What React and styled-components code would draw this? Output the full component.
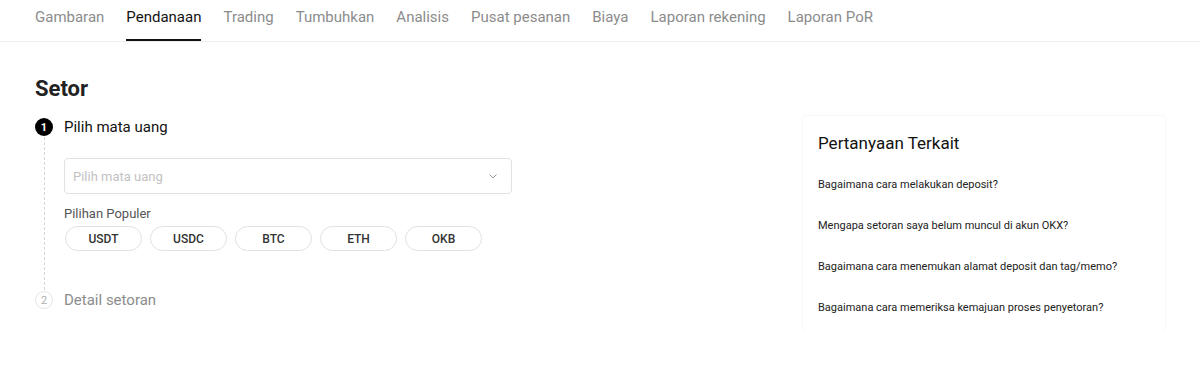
import styled, { createGlobalStyle } from 'styled-components';

const GlobalStyle = createGlobalStyle`
  body {
    margin: 0;
    background: #fff;
    font-family: Roboto, "Noto Sans", sans-serif;
    color: #121212;
  }
`;

const tabs = ['Gambaran', 'Pendanaan', 'Trading', 'Tumbuhkan', 'Analisis', 'Pusat pesanan', 'Biaya', 'Laporan rekening', 'Laporan PoR'];
const coins = ['USDT', 'USDC', 'BTC', 'ETH', 'OKB'];
const questions = [
  'Bagaimana cara melakukan deposit?',
  'Mengapa setoran saya belum muncul di akun OKX?',
  'Bagaimana cara menemukan alamat deposit dan tag/memo?',
  'Bagaimana cara memeriksa kemajuan proses penyetoran?',
];

const App = () => {
  return (
    <>
      <GlobalStyle />
      <NavBar>
        {tabs.map((t) => (
          <Tab key={t} $active={t === 'Pendanaan'}>{t}</Tab>
        ))}
      </NavBar>
      <Main>
        <LeftCol>
          <Title>Setor</Title>
          <Step>
            <StepHead>
              <StepNum $active>1</StepNum>
              <StepLabel $active>Pilih mata uang</StepLabel>
            </StepHead>
            <StepBody>
              <Select>
                <Placeholder>Pilih mata uang</Placeholder>
                <svg width="12" height="12" viewBox="0 0 12 12" fill="none">
                  <path d="M2.5 4.5L6 8l3.5-3.5" stroke="#9a9a9a" strokeWidth="1" />
                </svg>
              </Select>
              <PopularLabel>Pilihan Populer</PopularLabel>
              <Chips>
                {coins.map((c) => (
                  <Chip key={c}>{c}</Chip>
                ))}
              </Chips>
            </StepBody>
          </Step>
          <StepHead>
            <StepNum>2</StepNum>
            <StepLabel>Detail setoran</StepLabel>
          </StepHead>
        </LeftCol>
        <Card>
          <CardTitle>Pertanyaan Terkait</CardTitle>
          {questions.map((q) => (
            <Question key={q}>{q}</Question>
          ))}
        </Card>
      </Main>
    </>
  );
};

const NavBar = styled.nav`
  display: flex;
  gap: 22px;
  padding: 0 35px;
  height: 41px;
  border-bottom: 1px solid #eeeeee;
`;

const Tab = styled.div`
  display: flex;
  align-items: center;
  height: 100%;
  box-sizing: border-box;
  padding-bottom: 5px;
  font-size: 15px;
  color: ${(p) => (p.$active ? '#121212' : '#8c8c8c')};
  border-bottom: 2px solid ${(p) => (p.$active ? '#121212' : 'transparent')};
  margin-bottom: -1px;
`;

const Main = styled.div`
  display: flex;
  justify-content: space-between;
  padding: 32px 35px 0 35px;
`;

const LeftCol = styled.div`
  width: 477px;
  display: flex;
  flex-direction: column;
`;

const Title = styled.h1`
  margin: 0;
  font-size: 22px;
  font-weight: 700;
  line-height: 30px;
  color: #222;
`;

const Step = styled.div`
  display: flex;
  flex-direction: column;
  margin-top: 14px;
`;

const StepHead = styled.div`
  display: flex;
  align-items: center;
  gap: 11px;
  height: 18px;
`;

const StepNum = styled.div`
  width: 18px;
  height: 18px;
  border-radius: 50%;
  box-sizing: border-box;
  display: flex;
  align-items: center;
  justify-content: center;
  font-size: 11px;
  background: ${(p) => (p.$active ? '#000' : '#fff')};
  color: ${(p) => (p.$active ? '#fff' : '#b0b0b0')};
  border: ${(p) => (p.$active ? 'none' : '1px solid #e6e6e6')};
  font-weight: ${(p) => (p.$active ? 700 : 400)};
`;

const StepLabel = styled.div`
  font-size: 15px;
  color: ${(p) => (p.$active ? '#121212' : '#8c8c8c')};
`;

const StepBody = styled.div`
  margin-left: 9px;
  border-left: 1px dashed #d6d6d6;
  padding: 21px 0 39px 19px;
  margin-top: 1px;
  margin-bottom: 1px;
`;

const Select = styled.div`
  height: 36px;
  box-sizing: border-box;
  border: 1px solid #e2e2e2;
  border-radius: 4px;
  display: flex;
  align-items: center;
  justify-content: space-between;
  padding: 0 12px 0 8px;
`;

const Placeholder = styled.span`
  font-size: 13px;
  color: #c2c2c2;
`;

const PopularLabel = styled.div`
  margin-top: 12px;
  font-size: 13px;
  color: #555;
  line-height: 16px;
`;

const Chips = styled.div`
  display: flex;
  gap: 8px;
  margin-top: 4px;
  padding-left: 1px;
`;

const Chip = styled.div`
  width: 77px;
  height: 25px;
  box-sizing: border-box;
  border: 1px solid #e2e2e2;
  border-radius: 13px;
  display: flex;
  align-items: center;
  justify-content: center;
  font-size: 12px;
  font-weight: 500;
  color: #333;
`;

const Card = styled.div`
  width: 362px;
  height: 215px;
  margin-top: 42px;
  box-sizing: border-box;
  padding: 16px 15px;
  border-radius: 4px;
  box-shadow: 0 0 3px rgba(0, 0, 0, 0.08);
  display: flex;
  flex-direction: column;
`;

const CardTitle = styled.div`
  font-size: 17px;
  color: #121212;
  line-height: 22px;
  margin-bottom: 12px;
`;

const Question = styled.div`
  font-size: 11px;
  line-height: 16px;
  color: #222;
  margin-top: 11px;
  margin-bottom: 14px;
`;

export default App;
